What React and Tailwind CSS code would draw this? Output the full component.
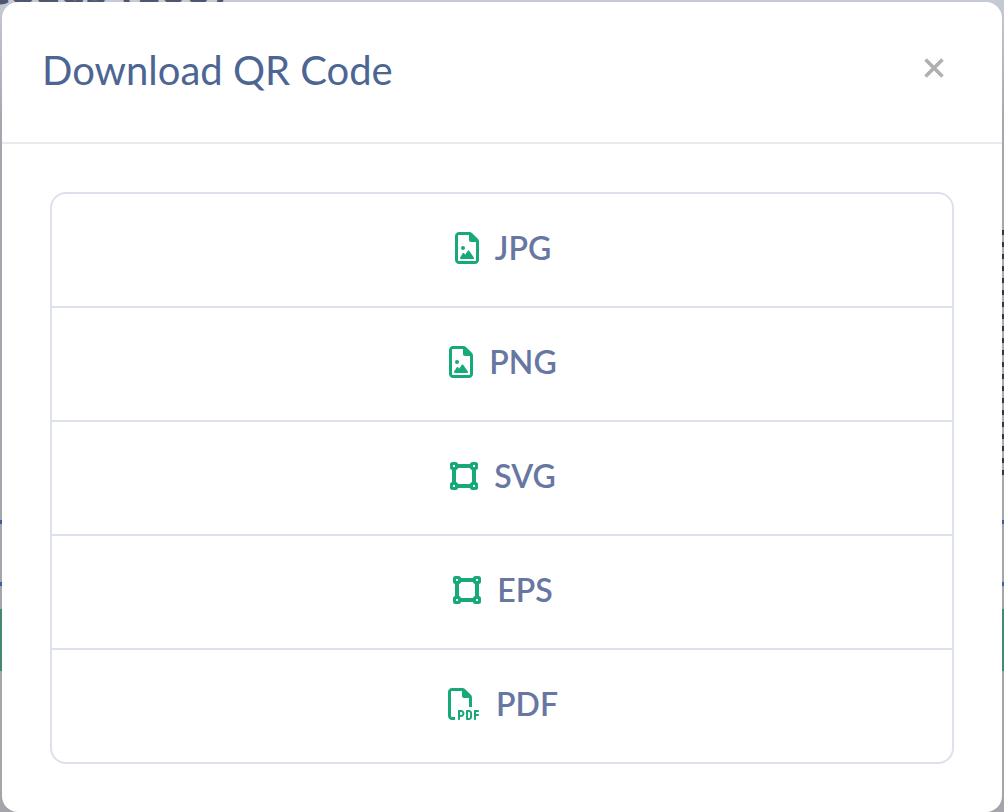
import { FaRegFileImage, FaRegFilePdf } from "react-icons/fa6";

function VectorSquareIcon({ className }) {
  return (
    <svg viewBox="0 0 28 28" fill="none" stroke="currentColor" className={className} aria-hidden="true">
      <path d="M7 4h14M7 24h14M4 7v14M24 7v14" strokeWidth="4" />
      <g strokeWidth="3">
        <rect x="1.5" y="1.5" width="5" height="5" rx="1" />
        <rect x="21.5" y="1.5" width="5" height="5" rx="1" />
        <rect x="1.5" y="21.5" width="5" height="5" rx="1" />
        <rect x="21.5" y="21.5" width="5" height="5" rx="1" />
      </g>
    </svg>
  );
}

const formats = [
  { label: "JPG", Icon: FaRegFileImage, size: "h-8 w-6" },
  { label: "PNG", Icon: FaRegFileImage, size: "h-8 w-6" },
  { label: "SVG", Icon: VectorSquareIcon, size: "h-7 w-7" },
  { label: "EPS", Icon: VectorSquareIcon, size: "h-7 w-7" },
  { label: "PDF", Icon: FaRegFilePdf, size: "h-8 w-8" },
];

function Backdrop() {
  return (
    <div
      aria-hidden="true"
      className="absolute inset-0 overflow-hidden bg-linear-to-b from-[#c5cad3] via-[#a6a6af] via-15% to-[#a4a5ab]"
    >
      <div className="absolute -top-7 -left-4 font-['DejaVu_Sans',sans-serif] text-[36px] leading-10 font-bold whitespace-nowrap text-[#4f5670]">
        Codes (100)
      </div>
      <div className="absolute inset-x-0 top-[520px] h-[66px] border-y-4 border-[#3d5c9f]" />
      <div className="absolute inset-x-0 top-[609px] h-[62px] bg-[#43886f]" />
      <div className="absolute top-[230px] right-0 h-[250px] w-1 bg-[repeating-linear-gradient(to_bottom,#33343c_0px,#33343c_5px,#a9aab3_5px,#a9aab3_12px)]" />
    </div>
  );
}

export default function App() {
  return (
    <div className="relative min-h-screen px-0.5 pt-0.5 font-[Lato,sans-serif]">
      <Backdrop />
      <section
        role="dialog"
        aria-labelledby="download-title"
        className="relative rounded-2xl bg-white"
      >
        <header className="flex h-[142px] items-center justify-between border-b-2 border-[#e9eaef] pr-14 pl-10">
          <h1 id="download-title" className="pb-1 text-[40px] leading-[48px] font-normal text-[#4c6593]">
            Download QR Code
          </h1>
          <button type="button" aria-label="Close" className="mb-2 p-0.5 text-[#b0b0b0]">
            <svg viewBox="0 0 20 20" className="size-5" fill="none" stroke="currentColor" strokeWidth="3.6" strokeLinecap="butt">
              <path d="M1.5 1.5l17 17M18.5 1.5l-17 17" />
            </svg>
          </button>
        </header>
        <div className="p-12">
          <ul className="divide-y-2 divide-[#dde0ed] rounded-2xl border-2 border-[#dde0ed]">
            {formats.map(({ label, Icon, size }) => (
              <li key={label}>
                <button
                  type="button"
                  className="flex h-28 w-full items-center justify-center gap-4 pb-1 pl-0.5 text-[32px] leading-10 font-semibold text-[#6777a1]"
                >
                  <Icon className={`${size} shrink-0 text-[#17a978]`} />
                  <span>{label}</span>
                </button>
              </li>
            ))}
          </ul>
        </div>
      </section>
    </div>
  );
}
